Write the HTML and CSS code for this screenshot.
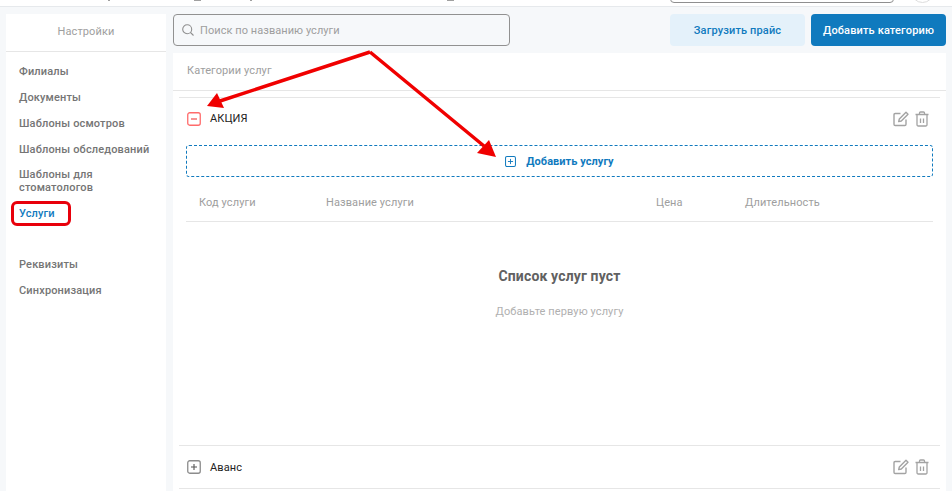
FILE: index.html
```html
<!DOCTYPE html>
<html lang="ru">
<head>
<meta charset="utf-8">
<title>Услуги</title>
<link rel="stylesheet" href="styles.css">
</head>
<body>
<header class="topbar">
  <i class="tick g1"></i>
  <i class="tick wide g2"></i>
  <i class="tick g3"></i>
  <i class="tick wide g4"></i>
  <div class="topbar-search"></div>
  <div class="topbar-avatar"></div>
</header>
<div class="page">
  <aside class="sidebar">
    <div class="sidebar-title">Настройки</div>
    <nav class="menu">
      <a class="menu-item">Филиалы</a>
      <a class="menu-item">Документы</a>
      <a class="menu-item">Шаблоны осмотров</a>
      <a class="menu-item">Шаблоны обследований</a>
      <a class="menu-item tight">Шаблоны для<br>стоматологов</a>
      <a class="menu-item active">Услуги</a>
      <a class="menu-item spaced">Реквизиты</a>
      <a class="menu-item">Синхронизация</a>
    </nav>
  </aside>
  <main class="main">
    <div class="toolbar">
      <label class="search">
        <svg class="search-icon" viewBox="0 0 12 12" width="12" height="12"><circle cx="5.2" cy="5.2" r="4.500" fill="none" stroke="#8f8f8f" stroke-width="1.100"/><path d="M8.500 8.500 11.500 11.500" stroke="#8f8f8f" stroke-width="1.100"/></svg>
        <span>Поиск по названию услуги</span>
      </label>
      <button class="btn btn-light">Загрузить прайс</button>
      <button class="btn btn-primary">Добавить категорию</button>
    </div>
    <section class="panel">
      <div class="panel-title">Категории услуг</div>
      <div class="category-wrap">
        <div class="category open">
          <div class="category-head">
            <svg class="box-icon" viewBox="0 0 14 14" width="14" height="14"><rect x=".75" y=".75" width="12.5" height="12.5" rx="2" fill="none" stroke="#ff6b6b" stroke-width="1.3"/><path d="M4 7h6" stroke="#f04b4b" stroke-width="1.2"/></svg>
            <span class="category-name">АКЦИЯ</span>
            <span class="actions">
              <svg viewBox="0 0 16 16" width="16" height="16"><path d="M7.5 2.5H2.2A1.2 1.2 0 0 0 1 3.7v9.6a1.2 1.2 0 0 0 1.2 1.2h9.6a1.2 1.2 0 0 0 1.2-1.2V8.5" fill="none" stroke="#a3a3a3" stroke-width="1.4"/><path d="M13 1.2 15 3.2 8.3 10 5.7 10.6 6.3 8Z" fill="none" stroke="#a3a3a3" stroke-width="1.4" stroke-linejoin="round"/></svg>
              <svg viewBox="0 0 14 16" width="14" height="16"><path d="M.5 3.5h13M4.5 3.5V2a1 1 0 0 1 1-1h3a1 1 0 0 1 1 1v1.500M2 3.500v10.300a1.200 1.200 0 0 0 1.200 1.200h7.600a1.200 1.200 0 0 0 1.200-1.200V3.500M5.500 7.500v4.500M8.500 7.500v4.500" fill="none" stroke="#a3a3a3" stroke-width="1.300"/></svg>
            </span>
          </div>
          <button class="add-service">
            <svg viewBox="0 0 12 12" width="11" height="11"><rect x=".6" y=".6" width="10.800" height="10.800" rx="1.500" fill="none" stroke="#107abe" stroke-width="1.100"/><path d="M3.200 6h5.600M6 3.200v5.600" stroke="#107abe" stroke-width="1"/></svg>
            <span>Добавить услугу</span>
          </button>
          <div class="table-head">
            <span class="col-code">Код услуги</span>
            <span class="col-name">Название услуги</span>
            <span class="col-price">Цена</span>
            <span class="col-time">Длительность</span>
          </div>
          <div class="empty">
            <div class="empty-title">Список услуг пуст</div>
            <div class="empty-text">Добавьте первую услугу</div>
          </div>
        </div>
        <div class="category">
          <div class="category-head">
            <svg class="box-icon" viewBox="0 0 14 14" width="14" height="14"><rect x=".75" y=".75" width="12.5" height="12.5" rx="2" fill="none" stroke="#8c8c8c" stroke-width="1.300"/><path d="M4 7h6M7 4v6" stroke="#555" stroke-width="1.100"/></svg>
            <span class="category-name">Аванс</span>
            <span class="actions">
              <svg viewBox="0 0 16 16" width="16" height="16"><path d="M7.5 2.5H2.2A1.2 1.2 0 0 0 1 3.7v9.6a1.2 1.2 0 0 0 1.2 1.2h9.6a1.2 1.2 0 0 0 1.2-1.2V8.5" fill="none" stroke="#a3a3a3" stroke-width="1.4"/><path d="M13 1.2 15 3.2 8.3 10 5.7 10.6 6.3 8Z" fill="none" stroke="#a3a3a3" stroke-width="1.4" stroke-linejoin="round"/></svg>
              <svg viewBox="0 0 14 16" width="14" height="16"><path d="M.5 3.5h13M4.5 3.5V2a1 1 0 0 1 1-1h3a1 1 0 0 1 1 1v1.500M2 3.500v10.300a1.200 1.200 0 0 0 1.200 1.200h7.600a1.200 1.200 0 0 0 1.200-1.200V3.500M5.500 7.500v4.500M8.500 7.500v4.500" fill="none" stroke="#a3a3a3" stroke-width="1.300"/></svg>
            </span>
          </div>
        </div>
      </div>
    </section>
  </main>
</div>
<div class="highlight-ring"></div>
<svg class="arrows" viewBox="0 0 952 491" width="952" height="491">
  <path d="M370 52 220 101M370 52 484 146" stroke="#f00000" stroke-width="3.500" fill="none"/>
  <path d="M207 106 217 93 224 108Z" fill="#f00000"/>
  <path d="M496 157 477 153 489 140Z" fill="#f00000"/>
</svg>
</body>
</html>
```
FILE: styles.css
```css
* { box-sizing: border-box; }
html, body { margin: 0; height: 100%; }
body {
  width: 952px;
  height: 491px;
  overflow: hidden;
  position: relative;
  background: #f6f8fa;
  font-family: Roboto, "Liberation Sans", sans-serif;
  font-size: 11px;
  color: #757575;
}
.topbar {
  height: 7px;
  background: #fff;
  border-bottom: 1px solid #e6e9ec;
  overflow: hidden;
  position: relative;
}
.tick {
  position: absolute;
  top: 0;
  width: 2px;
  height: 1px;
  background: #a0a0a0;
}
.tick.wide { width: 7px; }
.g1 { left: 108px; }
.g2 { left: 194px; }
.g3 { left: 250px; }
.g4 { left: 447px; }
.topbar-search {
  position: absolute;
  left: 670px;
  top: -20px;
  width: 224px;
  height: 23px;
  border: 1px solid #8f8f8f;
  border-radius: 4px;
}
.topbar-avatar {
  position: absolute;
  left: 911px;
  top: -20px;
  width: 23px;
  height: 23px;
  border: 1px solid #ddd;
  border-radius: 50%;
}
.page {
  display: flex;
  height: 484px;
  padding: 7px 6px 0;
  gap: 7px;
}
.sidebar {
  width: 160px;
  background: #fff;
  flex: none;
}
.sidebar-title {
  height: 38px;
  border-bottom: 1px solid #e6e6e6;
  text-align: center;
  line-height: 36px;
  color: #9e9e9e;
  letter-spacing: .1px;
}
.menu { padding: 13px 0 0 13px; display: flex; flex-direction: column; }
.menu-item {
  font-weight: 500;
  font-size: 11px;
  line-height: 13px;
  padding-bottom: 13px;
  letter-spacing: .15px;
}
.menu-item.active { color: #107abe; }
.menu-item.spaced { margin-top: 25px; }
.menu-item.tight { margin-top: -1px; }
.main { flex: 1; min-width: 0; display: flex; flex-direction: column; }
.toolbar { display: flex; height: 32px; margin-bottom: 7px; align-items: flex-start; }
.search {
  width: 337px;
  height: 32px;
  border: 1px solid #919191;
  border-radius: 4px;
  display: flex;
  align-items: center;
  gap: 6px;
  padding-left: 8px;
  background: #f6f8fa;
  color: #9e9e9e;
  margin-right: 160px;
  letter-spacing: .06px;
}
.search-icon { flex: none; }
.btn {
  height: 32px;
  border: 0;
  border-radius: 4px;
  font-family: inherit;
  font-size: 11px;
  font-weight: 500;
  letter-spacing: .14px;
  padding: 0;
}
.btn-light { width: 135px; background: #e4f1fa; color: #107abe; margin-right: 6px; }
.btn-primary { width: 135px; background: #107abe; color: #fff; }
.panel { flex: 1; background: #fff; min-height: 0; overflow: hidden; }
.panel-title {
  height: 38px;
  padding-left: 14px;
  line-height: 36px;
  border-bottom: 1px solid #e6e6e6;
  color: #9e9e9e;
  letter-spacing: .1px;
}
.category-wrap { padding: 6px 6px 0; }
.category { border-top: 1px solid #e6e6e6; }
.category:last-child { border-bottom: 1px solid #e6e6e6; }
.category-head {
  display: flex;
  align-items: center;
  height: 42px;
  padding: 0 11px 0 8px;
}
.category.open .category-head { height: 47px; padding-bottom: 6px; }
.box-icon { flex: none; margin-right: 9px; }
.category-name { color: #222; font-size: 11px; letter-spacing: .1px; }
.actions { margin-left: auto; display: flex; gap: 6px; align-items: center; }
.add-service {
  display: flex;
  align-items: center;
  justify-content: center;
  gap: 10px;
  width: 747px;
  height: 32px;
  margin-left: 7px;
  background: none;
  border: 1px dashed #107abe;
  border-radius: 3px;
  color: #107abe;
  font-family: inherit;
  font-weight: 700;
  font-size: 11px;
  letter-spacing: .05px;
  padding: 0;
}
.table-head {
  display: flex;
  height: 45px;
  margin: 0 7px;
  padding: 6px 0 0 13px;
  align-items: center;
  border-bottom: 1px solid #e6e6e6;
  color: #9e9e9e;
  letter-spacing: .1px;
}
.col-code { width: 127px; }
.col-name { width: 330px; }
.col-price { width: 89px; }
.empty { height: 223px; padding-top: 46px; text-align: center; margin: 0 7px; }
.empty-title { font-size: 14px; font-weight: 700; color: #616161; line-height: 17px; letter-spacing: .15px; }
.empty-text { margin-top: 20px; font-size: 11px; color: #b0b0b0; line-height: 13px; letter-spacing: .1px; }
.highlight-ring {
  position: absolute;
  left: 11px;
  top: 201px;
  width: 60px;
  height: 25px;
  border: 3px solid #e8000b;
  border-radius: 6px;
}
.arrows { position: absolute; left: 0; top: 0; pointer-events: none; }
```
